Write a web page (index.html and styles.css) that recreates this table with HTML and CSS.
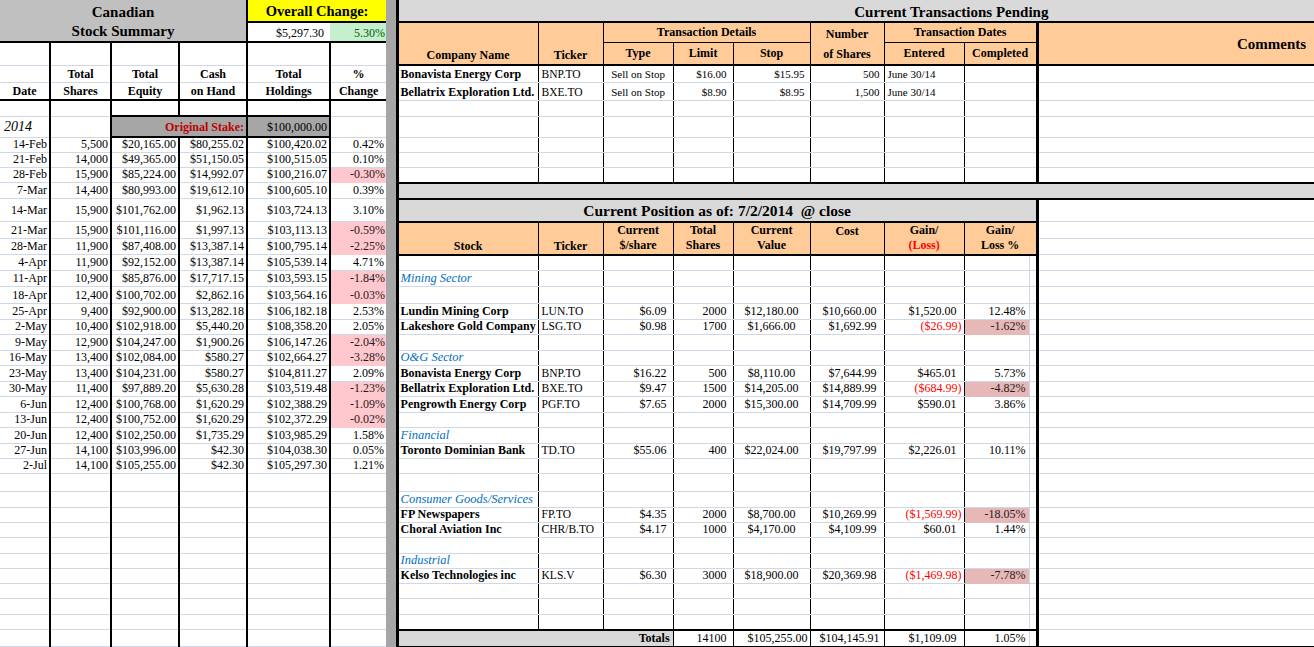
FILE: index.html
```html
<!DOCTYPE html>
<html>
<head>
<meta charset="utf-8">
<title>Canadian Stock Summary</title>
<link rel="stylesheet" href="styles.css">
</head>
<body>
<table class="sheet">
<colgroup>
<col class="w-date k2"><col class="w-shares k2"><col class="w-equity k2"><col class="w-cash k2"><col class="w-hold k2"><col class="w-pct"><col class="w-sep ksep"><col class="w-co k1"><col class="w-tk k1"><col class="w-c10 k1"><col class="w-c11 k1"><col class="w-c12 k1"><col class="w-c13 k1"><col class="w-c14 k1"><col class="w-c15 kg"><col class="w-c16 k3"><col class="w-c17">
</colgroup>
<tr class="h22">
<td class="title" rowspan="2" colspan="4">Canadian<br>Stock Summary</td>
<td class="yellow" colspan="2">Overall Change:</td>
<td class="sep" rowspan="39"></td>
<td class="bandtitle" colspan="10">Current Transactions Pending</td>
</tr>
<tr class="h20">
<td class="ovamt">$5,297.30</td>
<td class="ovpct">5.30%</td>
<td class="hd" rowspan="2">Company Name</td>
<td class="hd" rowspan="2">Ticker</td>
<td class="hd mid bb1" colspan="3">Transaction Details</td>
<td class="hd mid two" rowspan="2">Number<br>of Shares</td>
<td class="hd mid bb1" colspan="3">Transaction Dates</td>
<td class="hd mid cm" rowspan="2">Comments</td>
</tr>
<tr class="h23">
<td></td><td></td><td></td><td></td><td></td><td></td>
<td class="hd mid">Type</td><td class="hd mid">Limit</td><td class="hd mid">Stop</td><td class="hd mid">Entered</td><td class="hd mid" colspan="2">Completed</td>
</tr>
<tr class="h17">
<td></td><td class="lh">Total</td><td class="lh">Total</td><td class="lh">Cash</td><td class="lh">Total</td><td class="lh">%</td>
<td class="nm">Bonavista Energy Corp</td><td class="tk">BNP.TO</td><td class="c s11">Sell on Stop</td><td class="s11 p6">$16.00</td><td class="s11 p5">$15.95</td><td class="s11 p4">500</td><td class="l s11 pl3">June 30/14</td><td colspan="2"></td><td></td>
</tr>
<tr class="h18">
<td class="lh bb2">Date</td><td class="lh bb2">Shares</td><td class="lh bb2">Equity</td><td class="lh bb2">on Hand</td><td class="lh bb2">Holdings</td><td class="lh bb2">Change</td>
<td class="nm">Bellatrix Exploration Ltd.</td><td class="tk">BXE.TO</td><td class="c s11">Sell on Stop</td><td class="s11 p6">$8.90</td><td class="s11 p5">$8.95</td><td class="s11 p4">1,500</td><td class="l s11 pl3">June 30/14</td><td colspan="2"></td><td></td>
</tr>
<tr class="h16">
<td></td><td></td><td></td><td></td><td></td><td></td>
<td></td><td></td><td></td><td></td><td></td><td></td><td></td><td colspan="2"></td><td></td>
</tr>
<tr class="h21">
<td class="yr">2014</td><td></td><td class="stake" colspan="2">Original Stake:</td><td class="stakev">$100,000.00</td><td></td>
<td></td><td></td><td></td><td></td><td></td><td></td><td></td><td colspan="2"></td><td></td>
</tr>
<tr class="h15">
<td>14-Feb</td><td>5,500</td><td>$20,165.00</td><td>$80,255.02</td><td>$100,420.02</td><td>0.42%</td>
<td></td><td></td><td></td><td></td><td></td><td></td><td></td><td colspan="2"></td><td></td>
</tr>
<tr class="h15">
<td>21-Feb</td><td>14,000</td><td>$49,365.00</td><td>$51,150.05</td><td>$100,515.05</td><td>0.10%</td>
<td></td><td></td><td></td><td></td><td></td><td></td><td></td><td colspan="2"></td><td></td>
</tr>
<tr class="h15">
<td>28-Feb</td><td>15,900</td><td>$85,224.00</td><td>$14,992.07</td><td>$100,216.07</td><td class="pk">-0.30%</td>
<td></td><td></td><td></td><td></td><td></td><td></td><td></td><td colspan="2"></td><td></td>
</tr>
<tr class="h16">
<td>7-Mar</td><td>14,400</td><td>$80,993.00</td><td>$19,612.10</td><td>$100,605.10</td><td>0.39%</td>
<td class="band" colspan="10"></td>
</tr>
<tr class="h23">
<td>14-Mar</td><td>15,900</td><td>$101,762.00</td><td>$1,962.13</td><td>$103,724.13</td><td>3.10%</td>
<td class="postitle" colspan="9">Current Position as of: 7/2/2014&nbsp; @ close</td><td></td>
</tr>
<tr class="h17">
<td>21-Mar</td><td>15,900</td><td>$101,116.00</td><td>$1,997.13</td><td>$103,113.13</td><td class="pk">-0.59%</td>
<td class="hd ph" rowspan="2">Stock</td><td class="hd ph" rowspan="2">Ticker</td><td class="hd ph mid" rowspan="2">Current<br>$/share</td><td class="hd ph mid" rowspan="2">Total<br>Shares</td><td class="hd ph mid" rowspan="2">Current<br>Value</td><td class="hd ph topv" rowspan="2">Cost</td><td class="hd ph mid" rowspan="2">Gain/<br><span class="neg">(Loss)</span></td><td class="hd ph mid" rowspan="2" colspan="2">Gain/<br>Loss %</td><td></td>
</tr>
<tr class="h16">
<td>28-Mar</td><td>11,900</td><td>$87,408.00</td><td>$13,387.14</td><td>$100,795.14</td><td class="pk">-2.25%</td>
<td></td>
</tr>
<tr class="h16">
<td>4-Apr</td><td>11,900</td><td>$92,152.00</td><td>$13,387.14</td><td>$105,539.14</td><td>4.71%</td>
<td></td><td></td><td></td><td></td><td></td><td></td><td></td><td></td><td></td><td></td>
</tr>
<tr class="h16">
<td>11-Apr</td><td>10,900</td><td>$85,876.00</td><td>$17,717.15</td><td>$103,593.15</td><td class="pk">-1.84%</td>
<td class="sec">Mining Sector</td><td></td><td></td><td></td><td></td><td></td><td></td><td></td><td></td><td></td>
</tr>
<tr class="h17">
<td>18-Apr</td><td>12,400</td><td>$100,702.00</td><td>$2,862.16</td><td>$103,564.16</td><td class="pk">-0.03%</td>
<td></td><td></td><td></td><td></td><td></td><td></td><td></td><td></td><td></td><td></td>
</tr>
<tr class="h16">
<td>25-Apr</td><td>9,400</td><td>$92,900.00</td><td>$13,282.18</td><td>$106,182.18</td><td>2.53%</td>
<td class="nm">Lundin Mining Corp</td><td class="tk">LUN.TO</td><td class="p6">$6.09</td><td class="p6">2000</td><td class="c">$12,180.00</td><td class="p7">$10,660.00</td><td class="p7">$1,520.00</td><td class="p3">12.48%</td><td></td><td></td>
</tr>
<tr class="h15">
<td>2-May</td><td>10,400</td><td>$102,918.00</td><td>$5,440.20</td><td>$108,358.20</td><td>2.05%</td>
<td class="nm">Lakeshore Gold Company</td><td class="tk">LSG.TO</td><td class="p6">$0.98</td><td class="p6">1700</td><td class="c">$1,666.00</td><td class="p7">$1,692.99</td><td class="neg p2">($26.99)</td><td class="pk2 p3">-1.62%</td><td></td><td></td>
</tr>
<tr class="h16">
<td>9-May</td><td>12,900</td><td>$104,247.00</td><td>$1,900.26</td><td>$106,147.26</td><td class="pk">-2.04%</td>
<td></td><td></td><td></td><td></td><td></td><td></td><td></td><td></td><td></td><td></td>
</tr>
<tr class="h15">
<td>16-May</td><td>13,400</td><td>$102,084.00</td><td>$580.27</td><td>$102,664.27</td><td class="pk">-3.28%</td>
<td class="sec">O&amp;G Sector</td><td></td><td></td><td></td><td></td><td></td><td></td><td></td><td></td><td></td>
</tr>
<tr class="h16">
<td>23-May</td><td>13,400</td><td>$104,231.00</td><td>$580.27</td><td>$104,811.27</td><td>2.09%</td>
<td class="nm">Bonavista Energy Corp</td><td class="tk">BNP.TO</td><td class="p6">$16.22</td><td class="p6">500</td><td class="c">$8,110.00</td><td class="p7">$7,644.99</td><td class="p7">$465.01</td><td class="p3">5.73%</td><td></td><td></td>
</tr>
<tr class="h15">
<td>30-May</td><td>11,400</td><td>$97,889.20</td><td>$5,630.28</td><td>$103,519.48</td><td class="pk">-1.23%</td>
<td class="nm">Bellatrix Exploration Ltd.</td><td class="tk">BXE.TO</td><td class="p6">$9.47</td><td class="p6">1500</td><td class="c">$14,205.00</td><td class="p7">$14,889.99</td><td class="neg p2">($684.99)</td><td class="pk2 p3">-4.82%</td><td></td><td></td>
</tr>
<tr class="h16">
<td>6-Jun</td><td>12,400</td><td>$100,768.00</td><td>$1,620.29</td><td>$102,388.29</td><td class="pk">-1.09%</td>
<td class="nm">Pengrowth Energy Corp</td><td class="tk">PGF.TO</td><td class="p6">$7.65</td><td class="p6">2000</td><td class="c">$15,300.00</td><td class="p7">$14,709.99</td><td class="p7">$590.01</td><td class="p3">3.86%</td><td></td><td></td>
</tr>
<tr class="h15">
<td>13-Jun</td><td>12,400</td><td>$100,752.00</td><td>$1,620.29</td><td>$102,372.29</td><td class="pk">-0.02%</td>
<td></td><td></td><td></td><td></td><td></td><td></td><td></td><td></td><td></td><td></td>
</tr>
<tr class="h16">
<td>20-Jun</td><td>12,400</td><td>$102,250.00</td><td>$1,735.29</td><td>$103,985.29</td><td>1.58%</td>
<td class="sec">Financial</td><td></td><td></td><td></td><td></td><td></td><td></td><td></td><td></td><td></td>
</tr>
<tr class="h15">
<td>27-Jun</td><td>14,100</td><td>$103,996.00</td><td>$42.30</td><td>$104,038.30</td><td>0.05%</td>
<td class="nm">Toronto Dominian Bank</td><td class="tk">TD.TO</td><td class="p6">$55.06</td><td class="p6">400</td><td class="c">$22,024.00</td><td class="p7">$19,797.99</td><td class="p7">$2,226.01</td><td class="p3">10.11%</td><td></td><td></td>
</tr>
<tr class="h15">
<td>2-Jul</td><td>14,100</td><td>$105,255.00</td><td>$42.30</td><td>$105,297.30</td><td>1.21%</td>
<td></td><td></td><td></td><td></td><td></td><td></td><td></td><td></td><td></td><td></td>
</tr>
<tr class="h18">
<td></td><td></td><td></td><td></td><td></td><td></td>
<td></td><td></td><td></td><td></td><td></td><td></td><td></td><td></td><td></td><td></td>
</tr>
<tr class="h16">
<td></td><td></td><td></td><td></td><td></td><td></td>
<td class="sec">Consumer Goods/Services</td><td></td><td></td><td></td><td></td><td></td><td></td><td></td><td></td><td></td>
</tr>
<tr class="h15">
<td></td><td></td><td></td><td></td><td></td><td></td>
<td class="nm">FP Newspapers</td><td class="tk">FP.TO</td><td class="p6">$4.35</td><td class="p6">2000</td><td class="c">$8,700.00</td><td class="p7">$10,269.99</td><td class="neg p2">($1,569.99)</td><td class="pk2 p3">-18.05%</td><td></td><td></td>
</tr>
<tr class="h15">
<td></td><td></td><td></td><td></td><td></td><td></td>
<td class="nm">Choral Aviation Inc</td><td class="tk">CHR/B.TO</td><td class="p6">$4.17</td><td class="p6">1000</td><td class="c">$4,170.00</td><td class="p7">$4,109.99</td><td class="p7">$60.01</td><td class="p3">1.44%</td><td></td><td></td>
</tr>
<tr class="h16">
<td></td><td></td><td></td><td></td><td></td><td></td>
<td></td><td></td><td></td><td></td><td></td><td></td><td></td><td></td><td></td><td></td>
</tr>
<tr class="h15">
<td></td><td></td><td></td><td></td><td></td><td></td>
<td class="sec">Industrial</td><td></td><td></td><td></td><td></td><td></td><td></td><td></td><td></td><td></td>
</tr>
<tr class="h15">
<td></td><td></td><td></td><td></td><td></td><td></td>
<td class="nm">Kelso Technologies inc</td><td class="tk">KLS.V</td><td class="p6">$6.30</td><td class="p6">3000</td><td class="c">$18,900.00</td><td class="p7">$20,369.98</td><td class="neg p2">($1,469.98)</td><td class="pk2 p3">-7.78%</td><td></td><td></td>
</tr>
<tr class="h15">
<td></td><td></td><td></td><td></td><td></td><td></td>
<td></td><td></td><td></td><td></td><td></td><td></td><td></td><td></td><td></td><td></td>
</tr>
<tr class="h16">
<td></td><td></td><td></td><td></td><td></td><td></td>
<td></td><td></td><td></td><td></td><td></td><td></td><td></td><td></td><td></td><td></td>
</tr>
<tr class="h15">
<td></td><td></td><td></td><td></td><td></td><td></td>
<td></td><td></td><td></td><td></td><td></td><td></td><td></td><td></td><td></td><td></td>
</tr>
<tr class="h17">
<td></td><td></td><td></td><td></td><td></td><td></td>
<td class="tot" colspan="3">Totals</td><td class="tv p6">14100</td><td class="tv p2">$105,255.00</td><td class="tv p4">$104,145.91</td><td class="tv p7">$1,109.09</td><td class="tv p3">1.05%</td><td class="tv"></td><td class="bb2"></td>
</tr>
</table>
</body>
</html>
```

FILE: styles.css
```css
html, body {
  margin: 0;
  padding: 0;
  background: #ffffff;
}

body {
  overflow: hidden;
  font-family: "Liberation Serif", "Times New Roman", serif;
  color: #000000;
}

.sheet {
  border-collapse: collapse;
  table-layout: fixed;
  width: 1314px;
  font-size: 12px;
}

td {
  padding: 0 2px 2px 2px;
  border: 0;
  border-bottom: 1px solid #d0d7e5;
  line-height: 12px;
  white-space: nowrap;
  overflow: hidden;
  vertical-align: bottom;
  text-align: right;
}

/* row heights */
.h15 { height: 15px; }
.h16 { height: 16px; }
.h17 { height: 17px; }
.h18 { height: 18px; }
.h20 { height: 20px; }
.h21 { height: 21px; }
.h22 { height: 22px; }
.h23 { height: 23px; }
.h23 > td { vertical-align: middle; padding-bottom: 0; }

/* column widths */
.w-date { width: 50px; }
.w-shares { width: 61px; }
.w-equity { width: 68px; }
.w-cash { width: 68px; }
.w-hold { width: 83px; }
.w-pct { width: 56px; }
.w-sep { width: 11px; }
.w-co { width: 141px; }
.w-tk { width: 65px; }
.w-c10 { width: 70px; }
.w-c11 { width: 60px; }
.w-c12 { width: 77px; }
.w-c13 { width: 74px; }
.w-c14 { width: 80px; }
.w-c15 { width: 65px; }
.w-c16 { width: 8px; }
.w-c17 { width: 277px; }

/* column rules */
.k2 { border-right: 2px solid #000000; }
.k1 { border-right: 1px solid #000000; }
.kg { border-right: 1px solid #d0d7e5; }
.k3 { border-right: 3px solid #000000; }
.ksep { border-right: 3px solid #000000; }

/* alignment helpers */
.c { text-align: center; }
.l { text-align: left; }
.p2 { padding-right: 2px; }
.p3 { padding-right: 3px; }
.p4 { padding-right: 4px; }
.p5 { padding-right: 5px; }
.p6 { padding-right: 6px; }
.p7 { padding-right: 7px; }
.pl3 { padding-left: 3px; }
.s11 { font-size: 11px; }
.neg { color: #ff0000; }

/* left panel */
.title {
  background: #c0c0c0;
  font-size: 15px;
  font-weight: bold;
  text-align: center;
  vertical-align: top;
  line-height: 19px;
  padding: 3px 0 0 0;
  border-bottom: 2px solid #000000;
}

.yellow {
  background: #ffff00;
  font-size: 14.5px;
  font-weight: bold;
  text-align: center;
  vertical-align: middle;
  line-height: 16px;
  padding: 1px 0 0 0;
  border-bottom: 2px solid #000000;
}

.ovamt {
  padding-right: 6px;
  border-bottom: 2px solid #000000;
  border-right-style: hidden;
}

.ovpct {
  background: #c6efce;
  color: #006100;
  padding-right: 1px;
  border-bottom: 2px solid #000000;
}

.sep {
  background: #a6a6a6;
  padding: 0;
  border-bottom: 0;
}

.lh {
  font-weight: bold;
  text-align: center;
}

.yr {
  font-style: italic;
  font-size: 14px;
  text-align: left;
  vertical-align: middle;
  padding: 0 0 0 4px;
}

.stake,
.stakev {
  background: #a6a6a6;
  vertical-align: middle;
  padding: 0 2px;
  border-top: 2px solid #000000;
  border-bottom: 2px solid #000000;
}

.stake {
  color: #c00000;
  font-weight: bold;
}

.pk {
  background: #ffc7ce;
  border-bottom-color: #ffc7ce;
  color: #2a1a1a;
  padding-right: 1px;
}

/* right panel */
.bandtitle {
  background: #d9d9d9;
  font-size: 15px;
  font-weight: bold;
  text-align: center;
  line-height: 16px;
  padding: 0 0 1px 190px;
  border-bottom: 2px solid #000000;
}

.hd {
  background: #ffcc99;
  font-weight: bold;
  text-align: center;
  line-height: 14px;
  padding: 0 1px 2px 1px;
  border-bottom: 2px solid #000000;
}

.bb1 { border-bottom: 1px solid #000000; }
.bb2 { border-bottom: 2px solid #000000; }

.mid { vertical-align: middle; padding-bottom: 0; }
.topv { vertical-align: top; padding-top: 1px; }
.two { line-height: 20px; }
.ph { line-height: 15px; padding-bottom: 0; }

.cm {
  font-size: 15px;
  text-align: right;
  padding-right: 8px;
}

.band {
  background: #d9d9d9;
  padding: 0;
  border-top: 2px solid #000000;
  border-bottom: 2px solid #000000;
}

.postitle {
  background: #d9d9d9;
  font-size: 15.5px;
  font-weight: bold;
  text-align: center;
  line-height: 17px;
  padding: 0;
  border-bottom: 2px solid #000000;
}

.nm {
  font-weight: bold;
  text-align: left;
  padding-left: 2px;
}

.tk {
  text-align: left;
  font-size: 11.5px;
  padding-left: 3px;
}

.sec {
  font-style: italic;
  font-size: 12.5px;
  color: #0070c0;
  text-align: left;
  padding-left: 2px;
}

.pk2 {
  background: #e6b8b7;
  border-bottom-color: #e6b8b7;
  color: #2a1a1a;
}

.tot {
  background: #d9d9d9;
  font-weight: bold;
  padding-right: 3px;
  border-top: 2px solid #000000;
  border-bottom: 2px solid #000000;
}

.tv {
  border-top: 2px solid #000000;
  border-bottom: 2px solid #000000;
}
```
